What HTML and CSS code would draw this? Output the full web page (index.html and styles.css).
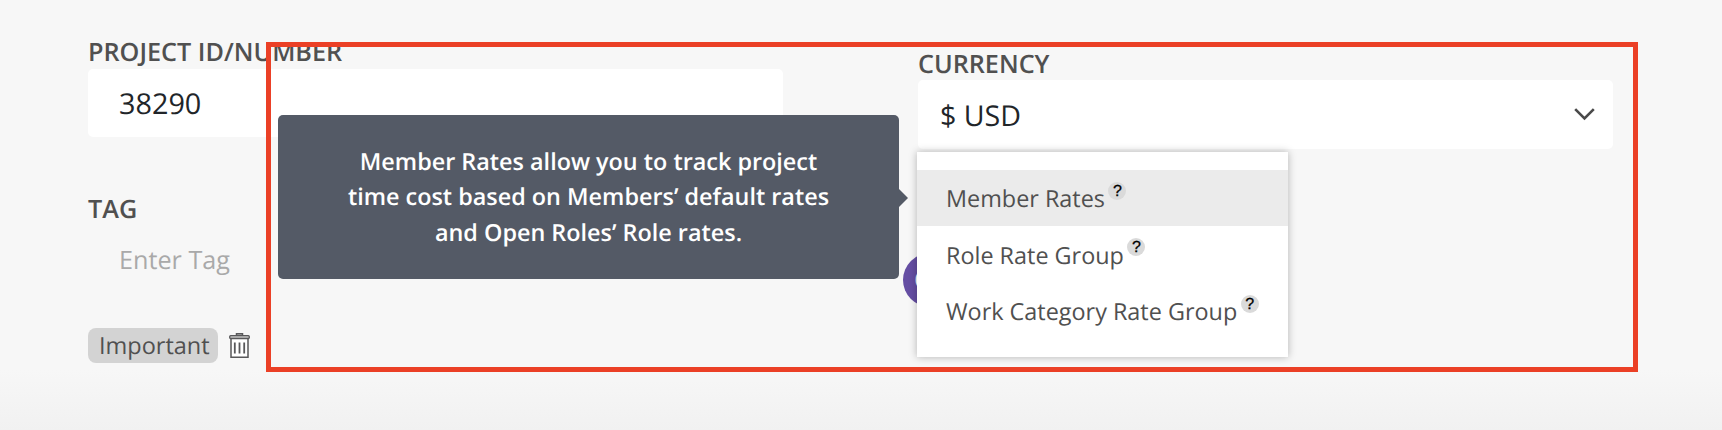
FILE: index.html
```html
<!DOCTYPE html>
<html>
<head>
  <meta charset="utf-8">
  <title>Project Details</title>
  <link rel="stylesheet" href="styles.css">
</head>
<body>
  <div class="project-form">
    <div class="column">
      <div class="label">PROJECT ID/NUMBER</div>
      <div class="input">38290</div>

      <div class="label tag-label">TAG</div>
      <div class="tag-input">Enter Tag</div>
      <div class="tags">
        <span class="tag">Important</span>
        <svg class="trash" width="21" height="25" viewBox="0 0 21 25">
          <path d="M2 5.5v18.7h17V5.5" fill="#fff" stroke="#58585a" stroke-width="1.5"/>
          <path d="M7.5 2.5V.8h6v1.7" fill="#c4c4c4" stroke="#58585a" stroke-width="1.5"/>
          <rect x=".7" y="2.7" width="19.6" height="2.8" rx="1" fill="#c4c4c4" stroke="#58585a" stroke-width="1.3"/>
          <path d="M5.8 9.5v11M10.5 9.5v11M15.2 9.5v11" stroke="#58585a" stroke-width="1.8"/>
        </svg>
      </div>
    </div>

    <div class="column right">
      <div class="label currency-label">CURRENCY</div>
      <div class="input select">
        <span class="value">$ USD</span>
        <svg width="21" height="13" viewBox="0 0 21 13">
          <path d="M1.2 1.2l9.3 9.3 9.3-9.3" fill="none" stroke="#4a4a4a" stroke-width="2.6"/>
        </svg>
      </div>
      <div class="avatar">C</div>
      <div class="menu">
        <div class="item active"><span>Member Rates</span><span class="help">?</span></div>
        <div class="item"><span>Role Rate Group</span><span class="help">?</span></div>
        <div class="item"><span>Work Category Rate Group</span><span class="help">?</span></div>
      </div>
    </div>
  </div>

  <div class="highlight"></div>

  <div class="tooltip">
    Member Rates allow you to track project<br>
    time cost based on Members’ default rates<br>
    and Open Roles’ Role rates.
  </div>
</body>
</html>
```

FILE: styles.css
```css
* {
  box-sizing: border-box;
}

body {
  margin: 0;
  height: 430px;
  overflow: hidden;
  position: relative;
  background: linear-gradient(#f7f7f7 370px, #f1f1f1 430px);
  font-family: "Open Sans", sans-serif;
  color: #505050;
  white-space: nowrap;
  text-rendering: geometricPrecision;
}

.project-form {
  display: flex;
  gap: 135px;
  padding: 34px 0 0 88px;
}

.column {
  width: 695px;
}

.right {
  position: relative;
  padding-top: 12px;
}

.label {
  height: 35px;
  line-height: 36px;
  font-size: 25.2px;
  font-weight: 600;
}

.currency-label {
  height: 34px;
}

.input {
  height: 68px;
  padding-left: 31px;
  border-radius: 5px;
  background: #fff;
  color: #212529;
  font-size: 28.8px;
  line-height: 70px;
}

.select {
  display: flex;
  align-items: center;
  justify-content: space-between;
  height: 69px;
  padding: 0 18px 0 22px;
}

.value {
  padding-top: 2px;
  font-size: 28.6px;
}

.tag-label {
  margin-top: 54px;
}

.tag-input {
  height: 68px;
  padding-left: 31px;
  color: #a9a9a9;
  font-size: 25.2px;
  line-height: 68px;
}

.tags {
  display: flex;
  align-items: center;
  gap: 11px;
  margin-top: 34px;
}

.tag {
  width: 130px;
  height: 35px;
  padding-left: 11px;
  border-radius: 8px;
  background: #d3d3d3;
  font-size: 23.5px;
  line-height: 34px;
}

/* avatar sits behind the menu */
.avatar {
  position: absolute;
  left: -15px;
  top: 219px;
  width: 54px;
  height: 54px;
  padding-left: 11px;
  border-radius: 50%;
  background: #654ea3;
  color: #fff;
  font-size: 26px;
  line-height: 53px;
}

.menu {
  position: absolute;
  left: -1px;
  top: 118px;
  width: 371px;
  height: 205px;
  padding-top: 18px;
  background: #fff;
  box-shadow: 0 0 8px rgba(0, 0, 0, 0.28);
}

.item {
  display: flex;
  align-items: center;
  gap: 3.5px;
  height: 56.5px;
  padding-top: 1px;
  padding-left: 29px;
  font-size: 23.4px;
}

.active {
  height: 56px;
  padding-top: 0;
  background: #ebebeb;
}

.help {
  width: 18px;
  height: 18px;
  margin-bottom: 15px;
  border-radius: 50%;
  background: #dadada;
  color: #000;
  font: 16px/19px "Liberation Sans", sans-serif;
  -webkit-text-stroke: 0.3px #000;
  text-align: center;
}

.highlight {
  position: absolute;
  left: 266px;
  top: 42px;
  width: 1372px;
  height: 330px;
  border: 5px solid #eb4026;
}

.tooltip {
  position: absolute;
  left: 278px;
  top: 115px;
  width: 621px;
  height: 164px;
  padding-top: 28.8px;
  border-radius: 5px;
  background: #545a66;
  color: #fff;
  font-size: 23.4px;
  font-weight: 600;
  line-height: 35.4px;
  text-align: center;
}

.tooltip::after {
  content: "";
  position: absolute;
  left: 100%;
  top: 74px;
  border: 9px solid transparent;
  border-left-color: #545a66;
  border-right: 0;
}
```
